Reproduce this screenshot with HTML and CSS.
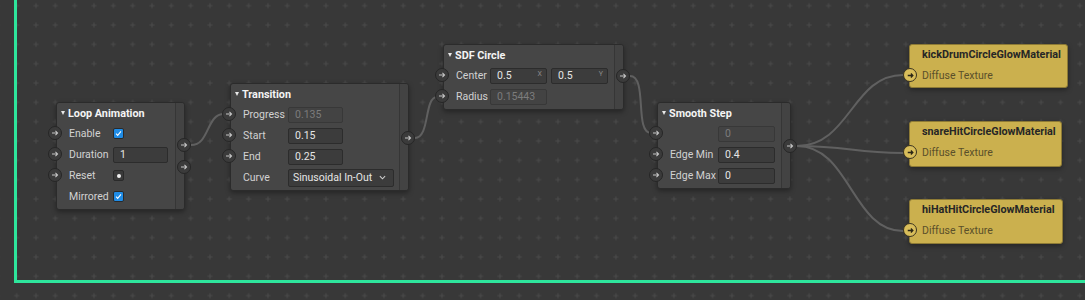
FILE: index.html
```html
<!DOCTYPE html>
<html lang="en">
<head>
    <meta charset="UTF-8">
    <title>Material Graph</title>
    <link rel="stylesheet" href="styles.css">
</head>
<body>

    <div class="canvas">
        <!-- background grid -->
        <svg class="grid" width="1085" height="300">
            <defs>
                <pattern id="plus" x="26.33" y="-3.97" width="19.33" height="19.33" patternUnits="userSpaceOnUse">
                    <path d="M7.17 9.67 H12.17 M9.67 7.17 V12.17" stroke="#4a4a4a" stroke-width="1"/>
                </pattern>
            </defs>
            <rect width="1085" height="300" fill="url(#plus)"/>
        </svg>

        <!-- selection frame -->
        <div class="frame"></div>

        <!-- wires -->
        <svg class="wires" width="1085" height="300">
            <path d="M191 145 C210 145 206 114 224 114"/>
            <path d="M415 138 C430 138 424 97 437 97"/>
            <path d="M630 76 C648 76 634 133 651 133"/>
            <path d="M797 146 C850 146 852 75 903 75"/>
            <path d="M797 146 C850 146 852 153 903 153"/>
            <path d="M797 146 C850 146 852 231 903 231"/>
        </svg>

        <!-- Loop Animation -->
        <div class="node node-loop">
            <div class="node-body">
                <div class="node-title"><span class="caret"></span>Loop Animation</div>
                <div class="row">
                    <span class="socket socket-in"><svg viewBox="0 0 14 14"><path d="M3.5 7H10M7.5 4.5L10 7L7.5 9.5"/></svg></span>
                    <span class="label">Enable</span>
                    <span class="check"><svg viewBox="0 0 11 11"><path d="M2.5 5.8L4.5 7.8L8.5 3"/></svg></span>
                </div>
                <div class="row">
                    <span class="socket socket-in"><svg viewBox="0 0 14 14"><path d="M3.5 7H10M7.5 4.5L10 7L7.5 9.5"/></svg></span>
                    <span class="label">Duration</span>
                    <span class="field field-55">1</span>
                </div>
                <div class="row">
                    <span class="socket socket-in"><svg viewBox="0 0 14 14"><path d="M3.5 7H10M7.5 4.5L10 7L7.5 9.5"/></svg></span>
                    <span class="label">Reset</span>
                    <span class="trigger"></span>
                </div>
                <div class="row">
                    <span class="label">Mirrored</span>
                    <span class="check"><svg viewBox="0 0 11 11"><path d="M2.5 5.8L4.5 7.8L8.5 3"/></svg></span>
                </div>
            </div>
            <div class="node-side">
                <span class="socket socket-out out-loop-1"><svg viewBox="0 0 14 14"><path d="M3.5 7H10M7.5 4.5L10 7L7.5 9.5"/></svg></span>
                <span class="socket socket-out out-loop-2"><svg viewBox="0 0 14 14"><path d="M3.5 7H10M7.5 4.5L10 7L7.5 9.5"/></svg></span>
            </div>
        </div>

        <!-- Transition -->
        <div class="node node-transition">
            <div class="node-body">
                <div class="node-title"><span class="caret"></span>Transition</div>
                <div class="row">
                    <span class="socket socket-in"><svg viewBox="0 0 14 14"><path d="M3.5 7H10M7.5 4.5L10 7L7.5 9.5"/></svg></span>
                    <span class="label">Progress</span>
                    <span class="field field-55 field-off">0.135</span>
                </div>
                <div class="row">
                    <span class="socket socket-in"><svg viewBox="0 0 14 14"><path d="M3.5 7H10M7.5 4.5L10 7L7.5 9.5"/></svg></span>
                    <span class="label">Start</span>
                    <span class="field field-55">0.15</span>
                </div>
                <div class="row">
                    <span class="socket socket-in"><svg viewBox="0 0 14 14"><path d="M3.5 7H10M7.5 4.5L10 7L7.5 9.5"/></svg></span>
                    <span class="label">End</span>
                    <span class="field field-55">0.25</span>
                </div>
                <div class="row">
                    <span class="label">Curve</span>
                    <span class="select">Sinusoidal In-Out<svg viewBox="0 0 8 5"><path d="M1 1L4 4L7 1"/></svg></span>
                </div>
            </div>
            <div class="node-side">
                <span class="socket socket-out out-transition"><svg viewBox="0 0 14 14"><path d="M3.5 7H10M7.5 4.5L10 7L7.5 9.5"/></svg></span>
            </div>
        </div>

        <!-- SDF Circle -->
        <div class="node node-sdf">
            <div class="node-body">
                <div class="node-title"><span class="caret"></span>SDF Circle</div>
                <div class="row">
                    <span class="socket socket-in"><svg viewBox="0 0 14 14"><path d="M3.5 7H10M7.5 4.5L10 7L7.5 9.5"/></svg></span>
                    <span class="label">Center</span>
                    <span class="pair">
                        <span class="field field-57">0.5<span class="axis">X</span></span>
                        <span class="field field-57">0.5<span class="axis">Y</span></span>
                    </span>
                </div>
                <div class="row">
                    <span class="socket socket-in"><svg viewBox="0 0 14 14"><path d="M3.5 7H10M7.5 4.5L10 7L7.5 9.5"/></svg></span>
                    <span class="label">Radius</span>
                    <span class="field field-57 field-off">0.15443</span>
                </div>
            </div>
            <div class="node-side">
                <span class="socket socket-out out-sdf"><svg viewBox="0 0 14 14"><path d="M3.5 7H10M7.5 4.5L10 7L7.5 9.5"/></svg></span>
            </div>
        </div>

        <!-- Smooth Step -->
        <div class="node node-smooth">
            <div class="node-body">
                <div class="node-title"><span class="caret"></span>Smooth Step</div>
                <div class="row">
                    <span class="socket socket-in"><svg viewBox="0 0 14 14"><path d="M3.5 7H10M7.5 4.5L10 7L7.5 9.5"/></svg></span>
                    <span class="label"></span>
                    <span class="field field-57 field-off">0</span>
                </div>
                <div class="row">
                    <span class="socket socket-in"><svg viewBox="0 0 14 14"><path d="M3.5 7H10M7.5 4.5L10 7L7.5 9.5"/></svg></span>
                    <span class="label">Edge Min</span>
                    <span class="field field-57">0.4</span>
                </div>
                <div class="row">
                    <span class="socket socket-in"><svg viewBox="0 0 14 14"><path d="M3.5 7H10M7.5 4.5L10 7L7.5 9.5"/></svg></span>
                    <span class="label">Edge Max</span>
                    <span class="field field-57">0</span>
                </div>
            </div>
            <div class="node-side">
                <span class="socket socket-out out-smooth"><svg viewBox="0 0 14 14"><path d="M3.5 7H10M7.5 4.5L10 7L7.5 9.5"/></svg></span>
            </div>
        </div>

        <!-- Material outputs -->
        <div class="material mat-kick">
            <div class="mat-title">kickDrumCircleGlowMaterial</div>
            <div class="mat-row"><span class="mat-socket"><svg viewBox="0 0 14 14"><path d="M3.5 7H10M7.5 4.5L10 7L7.5 9.5"/></svg></span>Diffuse Texture</div>
        </div>
        <div class="material mat-snare">
            <div class="mat-title">snareHitCircleGlowMaterial</div>
            <div class="mat-row"><span class="mat-socket"><svg viewBox="0 0 14 14"><path d="M3.5 7H10M7.5 4.5L10 7L7.5 9.5"/></svg></span>Diffuse Texture</div>
        </div>
        <div class="material mat-hihat">
            <div class="mat-title">hiHatHitCircleGlowMaterial</div>
            <div class="mat-row"><span class="mat-socket"><svg viewBox="0 0 14 14"><path d="M3.5 7H10M7.5 4.5L10 7L7.5 9.5"/></svg></span>Diffuse Texture</div>
        </div>
    </div>

</body>
</html>
```

FILE: styles.css
```css
body {
    margin: 0;
    padding: 0;
    background-color: #383838;
    font-family: Roboto, "Liberation Sans", sans-serif;
    font-size: 10.5px;
    overflow: hidden;
}
.canvas {
    position: relative;
    width: 1085px;
    height: 300px;
    overflow: hidden;
}
.grid,
.wires {
    position: absolute;
    left: 0;
    top: 0;
}
.wires path {
    fill: none;
    stroke: #606060;
    stroke-width: 2;
}
.frame {
    position: absolute;
    left: 14px;
    top: -20px;
    right: -20px;
    height: 303px;
    border: 3px solid #2ee59c;
    box-sizing: border-box;
}

/* generic node */
.node {
    position: absolute;
    display: flex;
    box-sizing: border-box;
    background: #464646;
    border: 1px solid #2b2b2b;
    border-radius: 3px;
    box-shadow: 0 2px 5px rgba(0, 0, 0, 0.35);
    color: #d2d2d2;
}
.node-body {
    flex: 1;
    padding: 0 0 4px 0;
}
.node-side {
    position: relative;
    width: 8px;
    background: #434343;
    border-left: 1px solid #363636;
    border-radius: 0 3px 3px 0;
}
.node-title {
    display: flex;
    align-items: center;
    height: 20px;
    padding-left: 4px;
    font-size: 10.8px;
    font-weight: bold;
    color: #f4f4f4;
}
.caret {
    width: 0;
    height: 0;
    border-left: 2.5px solid transparent;
    border-right: 2.5px solid transparent;
    border-top: 4px solid #e8e8e8;
    margin-right: 3px;
}
.row {
    position: relative;
    display: grid;
    grid-template-columns: var(--label-w) auto;
    align-items: center;
    height: 21px;
    padding-left: 12px;
}
.node-loop { left: 56px; top: 102px; width: 129px; height: 108px; --label-w: 44px; }
.node-transition { left: 230px; top: 83px; width: 179px; height: 108px; --label-w: 45px; }
.node-sdf { left: 443px; top: 44px; width: 181px; height: 66px; --label-w: 34px; }
.node-smooth { left: 657px; top: 102px; width: 134px; height: 87px; --label-w: 48px; }

.label {
    white-space: nowrap;
}

/* sockets */
.socket {
    position: absolute;
    width: 14px;
    height: 14px;
    box-sizing: border-box;
    border-radius: 50%;
    background: #3b3b3b;
    border: 1px solid #262626;
    display: flex;
    align-items: center;
    justify-content: center;
}
.socket svg {
    width: 12px;
    height: 12px;
}
.socket svg path {
    fill: none;
    stroke: #c8c8c8;
    stroke-width: 1.2;
}
.socket-in {
    left: -9px;
    top: 3px;
}
.socket-out {
    left: 1px;
}
.out-loop-1 { top: 35px; }
.out-loop-2 { top: 57px; }
.out-transition { top: 47px; }
.out-sdf { top: 24px; }
.out-smooth { top: 36px; }

/* controls */
.field {
    position: relative;
    display: block;
    box-sizing: border-box;
    height: 16px;
    line-height: 14px;
    padding: 0 6px;
    background: #3c3c3c;
    border: 1px solid #2c2c2c;
    border-radius: 2px;
    color: #e6e6e6;
}
.field-off {
    background: #434343;
    border-color: #383838;
    color: #7c7c7c;
}
.field-55 { width: 55px; }
.field-57 { width: 57px; }
.pair {
    display: flex;
    gap: 4px;
}
.axis {
    position: absolute;
    right: 4px;
    top: 1px;
    font-size: 7px;
    line-height: 8px;
    color: #8a8a8a;
}
.check {
    display: flex;
    width: 11px;
    height: 11px;
    box-sizing: border-box;
    background: #1f8ce6;
    border: 1px solid #2a2a2a;
    border-radius: 2px;
}
.check svg path {
    fill: none;
    stroke: #ffffff;
    stroke-width: 1.3;
}
.trigger {
    position: relative;
    width: 11px;
    height: 11px;
    box-sizing: border-box;
    background: #3a3a3a;
    border: 1px solid #2a2a2a;
    border-radius: 2px;
}
.trigger::after {
    content: "";
    position: absolute;
    left: 2.5px;
    top: 2.5px;
    width: 4px;
    height: 4px;
    border-radius: 50%;
    background: #f0f0f0;
}
.select {
    display: flex;
    align-items: center;
    justify-content: space-between;
    box-sizing: border-box;
    width: 106px;
    height: 18px;
    padding: 0 7px 0 4px;
    background: #3c3c3c;
    border: 1px solid #2c2c2c;
    border-radius: 2px;
    color: #e6e6e6;
}
.select svg {
    width: 7px;
    height: 5px;
}
.select svg path {
    fill: none;
    stroke: #d0d0d0;
    stroke-width: 1.2;
}

/* material output nodes */
.material {
    position: absolute;
    box-sizing: border-box;
    height: 44px;
    padding: 0 6px 0 12px;
    background: #cbb04e;
    border: 1px solid #8d7a35;
    border-radius: 3px;
    box-shadow: 0 2px 5px rgba(0, 0, 0, 0.35);
}
.mat-title {
    height: 20px;
    line-height: 20px;
    font-size: 10.8px;
    font-weight: bold;
    color: #262626;
}
.mat-row {
    position: relative;
    height: 21px;
    line-height: 22px;
    color: #5a4f2a;
}
.mat-socket {
    position: absolute;
    left: -19px;
    top: 3px;
    width: 14px;
    height: 14px;
    box-sizing: border-box;
    border-radius: 50%;
    background: #d8bd5a;
    border: 1.5px solid #3a3320;
    display: flex;
    align-items: center;
    justify-content: center;
}
.mat-socket svg {
    width: 11px;
    height: 11px;
}
.mat-socket svg path {
    fill: none;
    stroke: #2a2616;
    stroke-width: 1.6;
}
.mat-kick { left: 909px; top: 44px; width: 159px; }
.mat-snare { left: 909px; top: 121px; width: 153px; height: 46px; }
.mat-hihat { left: 909px; top: 199px; width: 154px; height: 45px; }
```
